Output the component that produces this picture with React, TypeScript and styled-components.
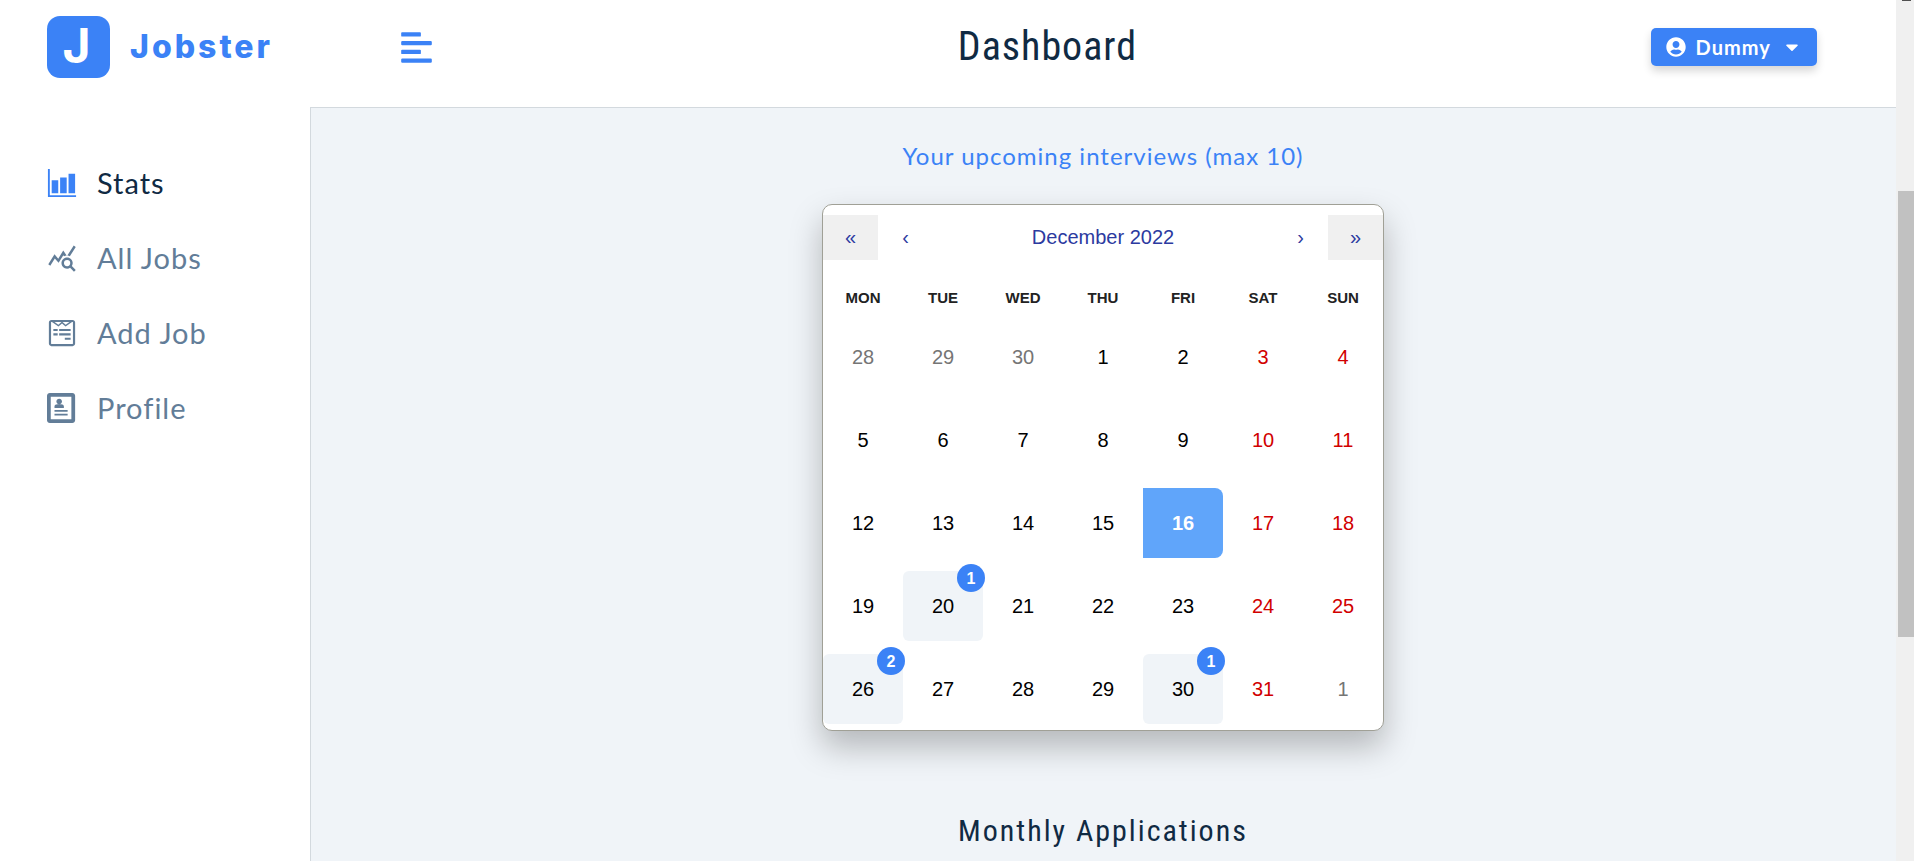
import React from "react";
import styled, { createGlobalStyle, css } from "styled-components";
import { FaAlignLeft, FaCaretDown, FaUserCircle, FaWpforms } from "react-icons/fa";
import { IoBarChartSharp } from "react-icons/io5";
import { MdQueryStats } from "react-icons/md";
import { ImProfile } from "react-icons/im";

const color = {
  primary: "#3b82f6",
  primaryLight: "#60a5fa",
  page: "#f0f4f8",
  heading: "#102a43",
  muted: "#627d98",
  line: "#d3d9de",
};

const GlobalStyle = createGlobalStyle`
  *, *::before, *::after { box-sizing: border-box; }
  body {
    margin: 0;
    background: ${color.page};
    color: ${color.heading};
    font-family: Lato, "Open Sans", sans-serif;
    overflow: hidden;
  }
  h1, h2, p { margin: 0; font-weight: 400; }
  button { font: inherit; border: 0; cursor: pointer; }
`;

const Shell = styled.div`
  display: grid;
  grid-template-columns: 310px minmax(0, 1fr) 18px;
  height: 100vh;
`;

const Sidebar = styled.aside`
  background: #fff;
  padding: 16px 0 0 47px;
`;

const Logo = styled.a`
  display: flex;
  align-items: center;
  gap: 20px;
  color: ${color.primary};
  text-decoration: none;
`;

const LogoMark = styled.span`
  display: grid;
  place-items: center;
  width: 63px;
  height: 62px;
  padding: 0 4px 2px 0;
  border-radius: 13px;
  background: ${color.primary};
  color: #fff;
  font: 700 48px/60px Inter, sans-serif;
`;

const LogoName = styled.span`
  font: 800 32px/40px Inter, sans-serif;
  letter-spacing: 3px;
`;

const NavList = styled.nav`
  display: flex;
  flex-direction: column;
  margin-top: 67px;
`;

const NavItem = styled.a<{ $active?: boolean }>`
  display: flex;
  align-items: center;
  gap: 20px;
  height: 75px;
  font-size: 29px;
  letter-spacing: 1px;
  text-decoration: none;
  color: ${(p) => (p.$active ? color.heading : color.muted)};
  svg {
    width: 30px;
    height: 30px;
    color: ${(p) => (p.$active ? color.primary : color.muted)};
  }
`;

const Content = styled.div`
  display: flex;
  flex-direction: column;
  min-width: 0;
  overflow: hidden;
`;

const Header = styled.header`
  flex: none;
  height: 107px;
  padding: 0 5% 13px;
  display: flex;
  align-items: center;
  justify-content: space-between;
  background: #fff;
`;

const ToggleButton = styled.button`
  display: flex;
  padding: 0 10px;
  background: transparent;
  color: ${color.primary};
`;

const PageTitle = styled.h1`
  font: 400 40px/48px "Roboto Condensed", "Liberation Sans Narrow", Roboto, sans-serif;
  letter-spacing: 1px;
`;

const UserButton = styled.button`
  display: flex;
  align-items: center;
  height: 38px;
  padding: 0 15px;
  border-radius: 5px;
  background: ${color.primary};
  color: #fff;
  font-size: 20px;
  font-weight: 700;
  letter-spacing: 1px;
  box-shadow: 0 5px 8px rgba(0, 0, 0, 0.16);
  span {
    margin: 0 11px 0 10px;
  }
`;

const Main = styled.main`
  flex: 1;
  display: flex;
  flex-direction: column;
  align-items: center;
  border-top: 1px solid ${color.line};
  box-shadow: inset 1px 0 0 ${color.line};
`;

const Upcoming = styled.p`
  margin-top: 32px;
  font-size: 24px;
  line-height: 32px;
  letter-spacing: 1px;
  color: ${color.primary};
`;

const SectionTitle = styled.h2`
  margin-top: 80px;
  font: 400 30px/40px "Roboto Condensed", "Liberation Sans Narrow", Roboto, sans-serif;
  letter-spacing: 2px;
`;

const CalendarCard = styled.section`
  width: 562px;
  margin-top: 32px;
  padding: 10px 0 6px;
  border: 1px solid #a0a096;
  border-radius: 10px;
  background: #fff;
  font: 400 20px/24px "Liberation Sans", Arial, sans-serif;
  box-shadow: 0 16px 32px rgba(0, 0, 0, 0.25);
`;

const MonthBar = styled.div`
  display: flex;
  height: 45px;
`;

const MonthButton = styled.button<{ $shaded?: boolean; $wide?: boolean }>`
  flex: ${(p) => (p.$wide ? "1" : "0 0 55px")};
  padding: 0 0 2px;
  background: ${(p) => (p.$shaded ? "#f0f0f0" : "transparent")};
  color: #2c3aa0;
`;

const MonthTable = styled.table`
  width: 100%;
  table-layout: fixed;
  border-collapse: collapse;
  td,
  th {
    padding: 0;
    text-align: center;
  }
  td {
    height: 83px;
    vertical-align: bottom;
  }
  th {
    height: 62px;
    padding-top: 14px;
    font-size: 15px;
    color: #222;
  }
  tbody tr:first-child td {
    height: 70px;
  }
`;

type Kind = "day" | "weekend" | "other";

const dayColor: Record<Kind, string> = {
  day: "#000",
  weekend: "#d10000",
  other: "#757575",
};

const Day = styled.button<{ $kind: Kind; $today?: boolean; $event?: boolean }>`
  position: relative;
  display: block;
  width: 100%;
  height: 70px;
  padding: 0;
  background: transparent;
  color: ${(p) => dayColor[p.$kind]};
  ${(p) =>
    p.$event &&
    css`
      border-radius: 6px;
      background: ${color.page};
    `}
  ${(p) =>
    p.$today &&
    css`
      border-radius: 0 8px 8px 0;
      background: ${color.primaryLight};
      color: #fff;
      font-weight: 700;
    `}
`;

const Badge = styled.span`
  position: absolute;
  top: -7px;
  right: -2px;
  width: 28px;
  height: 28px;
  border-radius: 50%;
  background: ${color.primary};
  color: #fff;
  font-size: 16px;
  font-weight: 700;
  line-height: 29px;
`;

const ScrollTrack = styled.div`
  padding-left: 2px;
  background: #f0f0f0;
`;

const ScrollArrow = styled.div`
  width: 9px;
  height: 1px;
  margin: 0 auto 190px;
  background: #505050;
`;

const ScrollThumb = styled.div`
  height: 446px;
  background: #c1c1c1;
`;

const weekdays = ["MON", "TUE", "WED", "THU", "FRI", "SAT", "SUN"];
const weeks = [
  [28, 29, 30, 1, 2, 3, 4],
  [5, 6, 7, 8, 9, 10, 11],
  [12, 13, 14, 15, 16, 17, 18],
  [19, 20, 21, 22, 23, 24, 25],
  [26, 27, 28, 29, 30, 31, 1],
];
const interviews: Record<number, number> = { 20: 1, 26: 2, 30: 1 };
const today = 16;

function kindOf(week: number, col: number, day: number): Kind {
  if ((week === 0 && day > 20) || (week === 4 && day < 10)) return "other";
  return col > 4 ? "weekend" : "day";
}

function Calendar() {
  return (
    <CalendarCard aria-label="Interview calendar">
      <MonthBar>
        <MonthButton $shaded aria-label="Previous year">«</MonthButton>
        <MonthButton aria-label="Previous month">‹</MonthButton>
        <MonthButton $wide>December 2022</MonthButton>
        <MonthButton aria-label="Next month">›</MonthButton>
        <MonthButton $shaded aria-label="Next year">»</MonthButton>
      </MonthBar>
      <MonthTable>
        <thead>
          <tr>
            {weekdays.map((d) => (
              <th key={d} scope="col">{d}</th>
            ))}
          </tr>
        </thead>
        <tbody>
          {weeks.map((week, w) => (
            <tr key={w}>
              {week.map((day, c) => {
                const kind = kindOf(w, c, day);
                const count = kind === "other" ? undefined : interviews[day];
                return (
                  <td key={c}>
                    <Day $kind={kind} $today={day === today} $event={!!count}>
                      {day}
                      {count && <Badge>{count}</Badge>}
                    </Day>
                  </td>
                );
              })}
            </tr>
          ))}
        </tbody>
      </MonthTable>
    </CalendarCard>
  );
}

export default function App() {
  return (
    <>
      <GlobalStyle />
      <Shell>
        <Sidebar>
          <Logo href="#home">
            <LogoMark>J</LogoMark>
            <LogoName>Jobster</LogoName>
          </Logo>
          <NavList>
            <NavItem href="#stats" $active><IoBarChartSharp />Stats</NavItem>
            <NavItem href="#all-jobs"><MdQueryStats />All Jobs</NavItem>
            <NavItem href="#add-job"><FaWpforms />Add Job</NavItem>
            <NavItem href="#profile"><ImProfile />Profile</NavItem>
          </NavList>
        </Sidebar>
        <Content>
          <Header>
            <ToggleButton aria-label="Toggle sidebar"><FaAlignLeft size={35} /></ToggleButton>
            <PageTitle>Dashboard</PageTitle>
            <UserButton>
              <FaUserCircle />
              <span>Dummy</span>
              <FaCaretDown />
            </UserButton>
          </Header>
          <Main>
            <Upcoming>Your upcoming interviews (max 10)</Upcoming>
            <Calendar />
            <SectionTitle>Monthly Applications</SectionTitle>
          </Main>
        </Content>
        <ScrollTrack aria-hidden="true">
          <ScrollArrow />
          <ScrollThumb />
        </ScrollTrack>
      </Shell>
    </>
  );
}
